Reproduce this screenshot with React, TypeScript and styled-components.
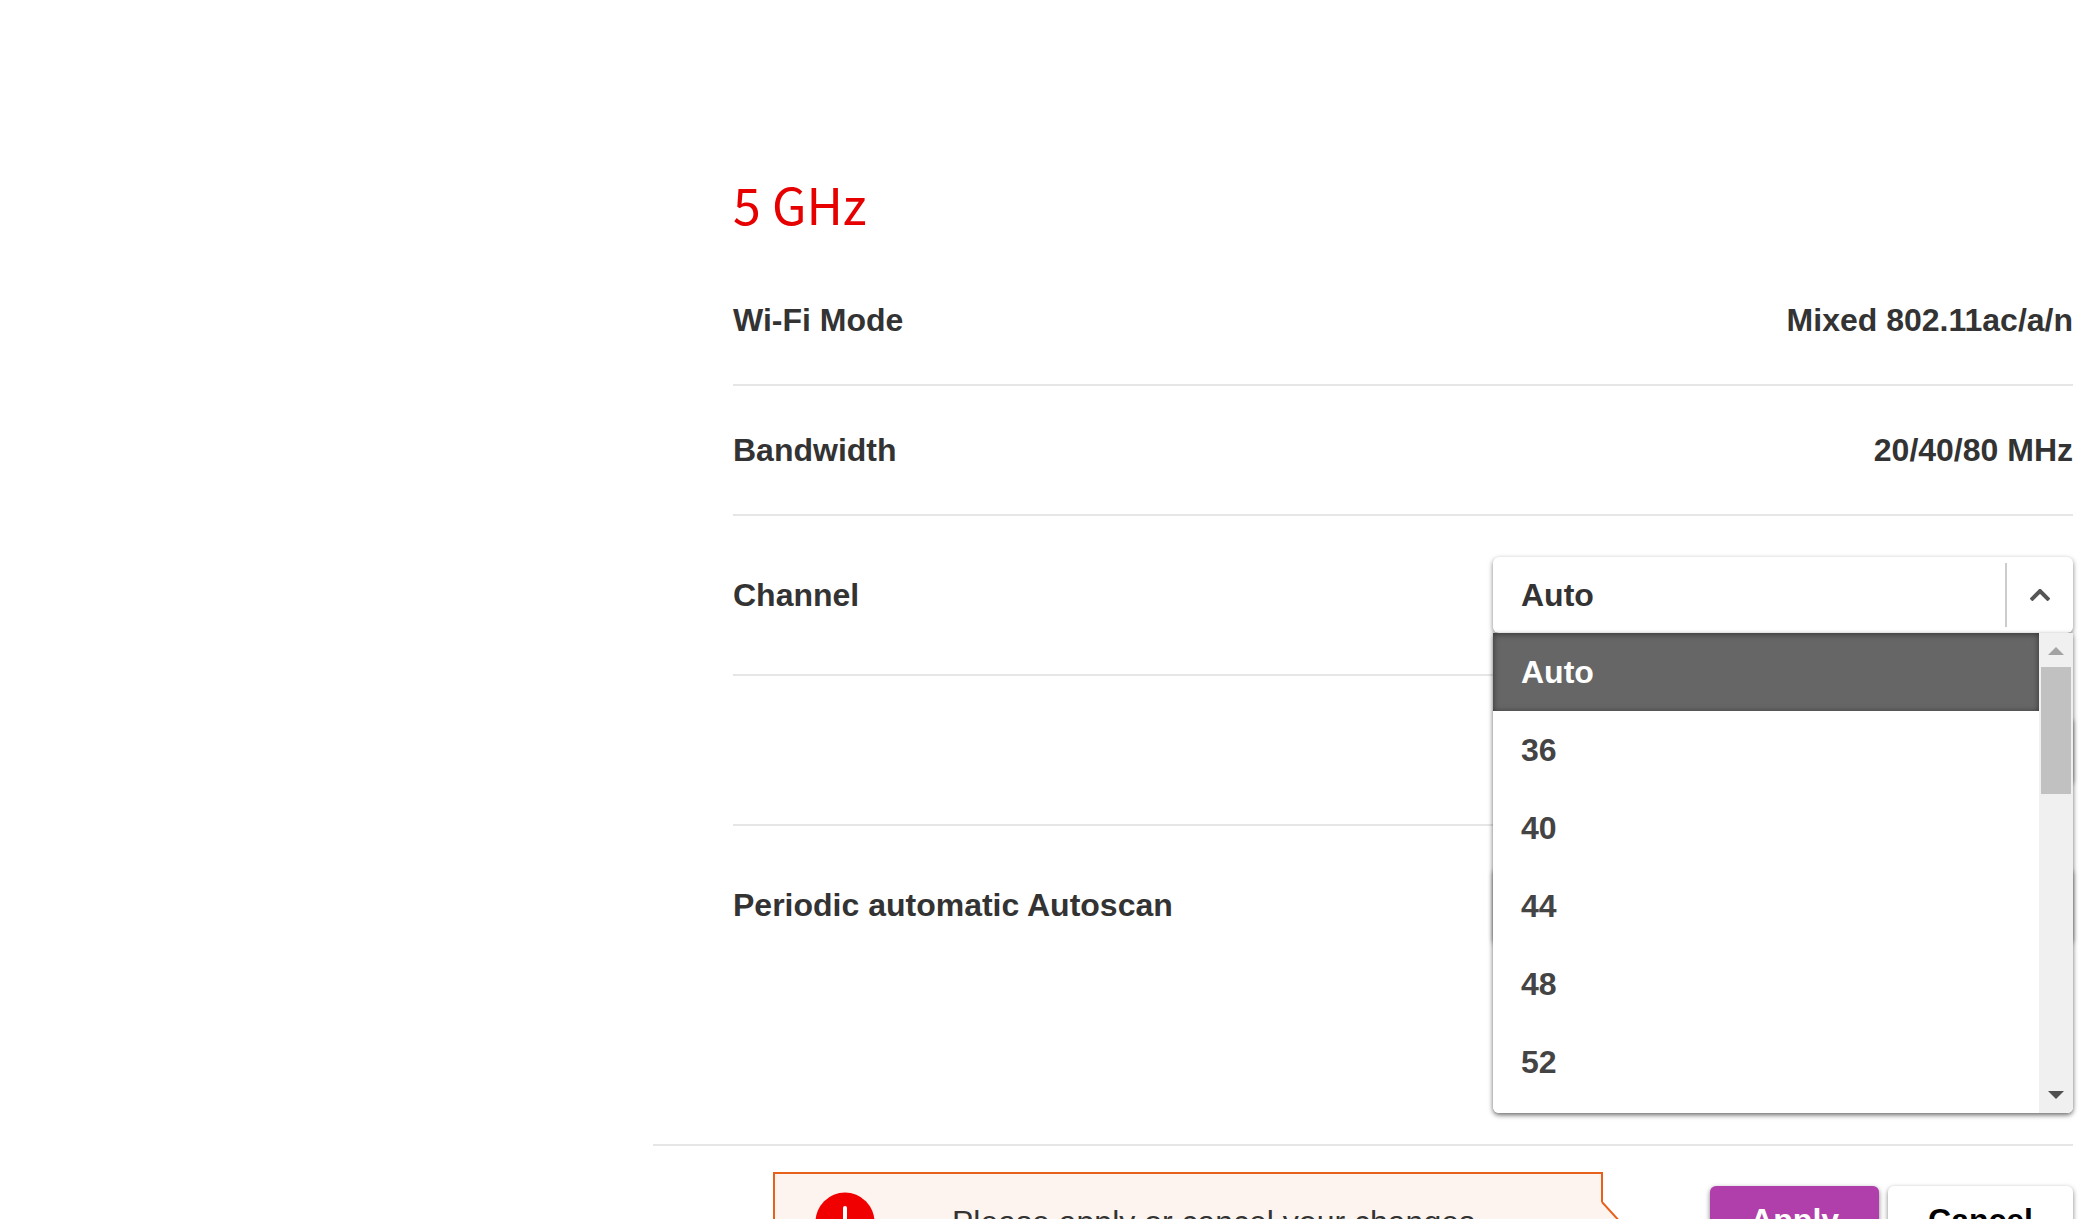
import React, { useState } from "react";
import styled, { createGlobalStyle, css } from "styled-components";

const GlobalStyle = createGlobalStyle`
  *, *::before, *::after { box-sizing: border-box; }
  html, body { margin: 0; background: #ffffff; }
  body, button, select {
    font-family: "Liberation Sans", Arial, sans-serif;
    font-size: 32px;
    line-height: 36px;
    color: #333333;
  }
`;

const raised = css`
  border: 0;
  border-radius: 6px;
  box-shadow: 0 2px 5px rgba(0, 0, 0, 0.5);
`;

const Page = styled.main`
  height: 100vh;
  overflow: hidden;
  display: flex;
  flex-direction: column;
  padding: 170px 17px 0 653px;
`;

const Section = styled.section`
  padding-left: 80px;
`;

const Heading = styled.h2`
  margin: 0 0 20px;
  font-family: "Noto Sans CJK SC", "Open Sans", sans-serif;
  font-size: 50px;
  line-height: 66px;
  font-weight: 400;
  color: #e60000;
`;

const Row = styled.div<{ $height: number; $last?: boolean }>`
  display: flex;
  align-items: center;
  justify-content: space-between;
  height: ${(p) => p.$height}px;
  font-weight: 700;
  border-bottom: ${(p) => (p.$last ? "0" : "2px solid #e6e6e6")};
`;

const Field = styled.div`
  position: relative;
  width: 580px;
`;

const Select = styled.select`
  ${raised}
  display: block;
  appearance: none;
  width: 100%;
  height: 76px;
  padding: 0 84px 0 28px;
  background: #ffffff;
  font-weight: 700;
  outline: none;
`;

const Toggle = styled.span`
  position: absolute;
  top: 6px;
  right: 0;
  display: flex;
  align-items: center;
  justify-content: center;
  width: 68px;
  height: 64px;
  border-left: 2px solid #cccccc;
  pointer-events: none;
`;

const Menu = styled.div`
  position: absolute;
  z-index: 2;
  top: 100%;
  left: 0;
  right: 0;
  display: flex;
  height: 480px;
  overflow: hidden;
  background: #ffffff;
  border-radius: 0 0 6px 6px;
`;

const MenuShadow = styled.div`
  position: absolute;
  z-index: 1;
  top: 100%;
  left: 0;
  right: 0;
  height: 480px;
  border-radius: 0 0 6px 6px;
  box-shadow: 0 2px 5px rgba(0, 0, 0, 0.6);
`;

const List = styled.ul`
  flex: 1;
  margin: 0;
  padding: 0;
  list-style: none;
`;

const Option = styled.li<{ $selected: boolean }>`
  display: flex;
  align-items: center;
  height: 78px;
  padding: 0 28px;
  color: ${(p) => (p.$selected ? "#ffffff" : "#444444")};
  background: ${(p) => (p.$selected ? "#666666" : "transparent")};
  box-shadow: ${(p) => (p.$selected ? "inset 0 1px 6px rgba(0, 0, 0, 0.5)" : "none")};
  cursor: pointer;
`;

const Scrollbar = styled.div`
  display: flex;
  flex-direction: column;
  width: 34px;
  background: #f0f0f0;
`;

const Track = styled.div`
  flex: 1;
  padding: 0 2px;
`;

const Thumb = styled.div`
  height: 127px;
  background: #c1c1c1;
`;

const ScrollButton = styled.button`
  display: block;
  width: 34px;
  height: 34px;
  padding: 0;
  border: 0;
  background: none;

  svg {
    display: block;
  }
`;

const Button = styled.button<{ $primary?: boolean }>`
  ${raised}
  height: 68px;
  padding: 0 40px;
  font-weight: 700;
  color: ${(p) => (p.$primary ? "#ffffff" : "#000000")};
  background: ${(p) => (p.$primary ? "#b03fab" : "#ffffff")};
`;

const ScanButton = styled(Button)`
  width: 240px;
`;

const Footer = styled.footer`
  display: flex;
  align-items: flex-start;
  justify-content: space-between;
  margin-top: 160px;
  padding: 26px 0 26px 120px;
  border-top: 2px solid #e6e6e6;
`;

const Notice = styled.div`
  position: relative;
  display: flex;
  align-items: center;
  gap: 77px;
  width: 830px;
  height: 100px;
  padding: 0 40px;
  border: 2px solid #e8611a;
  background: #fef4ef;
`;

const Pointer = styled.svg`
  position: absolute;
  left: 100%;
  top: 28px;
  margin-left: -1px;
`;

const Actions = styled.div`
  display: flex;
  gap: 9px;
  padding-top: 14px;
`;

const channels = ["Auto", "36", "40", "44", "48", "52"];

function ChevronUp() {
  return (
    <svg width="20" height="12" viewBox="0 0 20 12" aria-hidden="true">
      <path d="M1 11 L10 2 L19 11" fill="none" stroke="#555555" strokeWidth="4" />
    </svg>
  );
}

function ChannelSelect() {
  const [channel, setChannel] = useState("Auto");
  return (
    <Field>
      <Select id="channel" value={channel} onChange={(e) => setChannel(e.target.value)}>
        {channels.map((c) => (
          <option key={c}>{c}</option>
        ))}
      </Select>
      <Toggle>
        <ChevronUp />
      </Toggle>
      <MenuShadow />
      <Menu>
        <List role="listbox" aria-label="Channel">
          {channels.map((c) => (
            <Option
              key={c}
              role="option"
              aria-selected={c === channel}
              $selected={c === channel}
              onClick={() => setChannel(c)}
            >
              {c}
            </Option>
          ))}
        </List>
        <Scrollbar>
          <ScrollButton type="button" aria-label="Scroll up">
            <svg width="34" height="34" viewBox="0 0 34 34">
              <path d="M9 22 L17 14 L25 22 Z" fill="#a3a3a3" />
            </svg>
          </ScrollButton>
          <Track>
            <Thumb />
          </Track>
          <ScrollButton type="button" aria-label="Scroll down">
            <svg width="34" height="34" viewBox="0 0 34 34">
              <path d="M9 12 L25 12 L17 20 Z" fill="#505050" />
            </svg>
          </ScrollButton>
        </Scrollbar>
      </Menu>
    </Field>
  );
}

export default function App() {
  return (
    <>
      <GlobalStyle />
      <Page>
        <Section>
          <Heading>5 GHz</Heading>
          <Row $height={130}>
            <span>Wi-Fi Mode</span>
            <span>Mixed 802.11ac/a/n</span>
          </Row>
          <Row $height={130}>
            <span>Bandwidth</span>
            <span>20/40/80 MHz</span>
          </Row>
          <Row $height={160}>
            <label htmlFor="channel">Channel</label>
            <ChannelSelect />
          </Row>
          <Row $height={150}>
            <span />
            <ScanButton type="button" aria-label="Autoscan" />
          </Row>
          <Row $height={158} $last>
            <label htmlFor="autoscan">Periodic automatic Autoscan</label>
            <Field>
              <Select id="autoscan" />
            </Field>
          </Row>
        </Section>
        <Footer>
          <Notice role="alert">
            <svg width="60" height="60" viewBox="0 0 60 60" aria-hidden="true">
              <circle cx="30" cy="30" r="29.5" fill="#f00000" />
              <path d="M30 16 V34" stroke="#ffffff" strokeWidth="4" strokeLinecap="round" />
              <circle cx="30" cy="43" r="3" fill="#ffffff" />
            </svg>
            <span>Please apply or cancel your changes</span>
            <Pointer width="24" height="44" viewBox="0 0 24 44" aria-hidden="true">
              <path d="M0 0 H3 L23 22 L3 44 H0 Z" fill="#fef4ef" />
              <path d="M2 0 L22 22 L2 44" fill="none" stroke="#e8611a" strokeWidth="2" />
            </Pointer>
          </Notice>
          <Actions>
            <Button type="button" $primary>
              Apply
            </Button>
            <Button type="button">Cancel</Button>
          </Actions>
        </Footer>
      </Page>
    </>
  );
}
